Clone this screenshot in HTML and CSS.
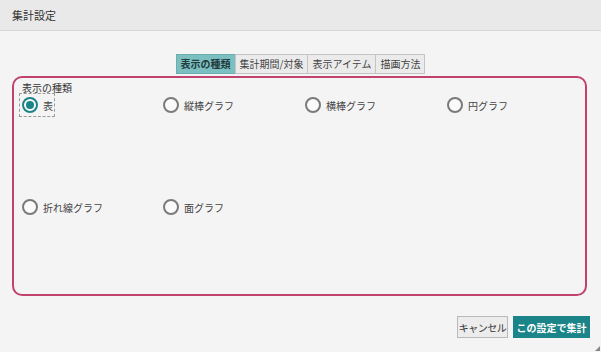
FILE: index.html
```html
<!DOCTYPE html>
<html lang="ja">
<head>
    <meta charset="UTF-8">
    <title>集計設定</title>
    <link rel="stylesheet" href="styles.css">
</head>
<body>
<div class="dialog">
    <div class="titlebar">集計設定</div>
    <div class="tabs">
        <div class="tab active">表示の種類</div>
        <div class="tab">集計期間/対象</div>
        <div class="tab">表示アイテム</div>
        <div class="tab">描画方法</div>
    </div>
    <div class="panel">
        <div class="legend">表示の種類</div>
        <div class="choices">
            <label class="choice focused"><span class="radio checked"></span>表</label>
            <label class="choice"><span class="radio"></span>縦棒グラフ</label>
            <label class="choice"><span class="radio"></span>横棒グラフ</label>
            <label class="choice"><span class="radio"></span>円グラフ</label>
            <label class="choice"><span class="radio"></span>折れ線グラフ</label>
            <label class="choice"><span class="radio"></span>面グラフ</label>
        </div>
    </div>
    <div class="buttons">
        <button class="btn cancel">キャンセル</button>
        <button class="btn primary">この設定で集計</button>
    </div>
    <div class="grip"></div>
</div>
</body>
</html>
```

FILE: styles.css
```css
html, body {
    margin: 0;
    height: 100%;
}

body {
    background: #f4f4f4;
    font-family: "Noto Sans CJK JP", "Noto Sans", sans-serif;
    color: #333;
}

.dialog {
    position: relative;
    width: 601px;
    height: 352px;
    overflow: hidden;
}

.titlebar {
    height: 30px;
    line-height: 30px;
    padding-left: 12px;
    font-size: 11px;
    color: #333;
    background: #e9e9e9;
    border-bottom: 1px solid #d6d6d6;
}

.tabs {
    display: flex;
    justify-content: center;
    margin-top: 23px;
    padding-left: 1px;
}

.tab {
    height: 18px;
    line-height: 18px;
    padding: 0 4px;
    font-size: 10px;
    color: #444;
    background: #ebebeb;
    border: 1px solid #c4c4c4;
    margin-left: -1px;
}

.tab.active {
    background: #7bbfc1;
    border-color: #6aaeb0;
    color: #1f3b3c;
    font-weight: bold;
}

.panel {
    height: 216px;
    margin: 2px 14px 0 12px;
    border: 2px solid #c2426f;
    border-radius: 10px;
    padding: 0 0 0 8px;
}

.legend {
    font-size: 10px;
    line-height: 13px;
    margin-top: 3px;
    color: #333;
}

.choices {
    display: grid;
    grid-template-columns: 141px 142px 142px 141px;
    grid-template-rows: 22px 22px;
    row-gap: 80px;
}

.choice {
    display: flex;
    align-items: center;
    gap: 5px;
    font-size: 10px;
    color: #444;
    justify-self: start;
    padding: 0 2px 0 0;
}

.choice.focused {
    outline: 1px dashed #9a9a9a;
    outline-offset: 0;
    margin-left: -2px;
    padding-left: 2px;
    padding-right: 1px;
}

.radio {
    width: 12px;
    height: 12px;
    border: 2px solid #7a7a7a;
    border-radius: 50%;
    background: #fafafa;
    position: relative;
}

.radio.checked {
    border-color: #1b8488;
}

.radio.checked::after {
    content: "";
    position: absolute;
    left: 2px;
    top: 2px;
    width: 8px;
    height: 8px;
    border-radius: 50%;
    background: #1b8488;
}

.buttons {
    display: flex;
    justify-content: flex-end;
    gap: 5px;
    margin: 20px 11px 0 0;
}

.btn {
    height: 22px;
    padding: 0;
    font-family: inherit;
    font-size: 10px;
    border-radius: 0;
    background: #ececec;
    border: 1px solid #b9b9b9;
    color: #333;
}

.btn.cancel {
    width: 51px;
    letter-spacing: -0.5px;
}

.btn.primary {
    width: 77px;
    background: #1b8488;
    border-color: #1b8488;
    color: #fff;
    font-weight: bold;
}

.grip {
    position: absolute;
    right: 1px;
    bottom: 1px;
    width: 0;
    height: 0;
    border-left: 5px solid transparent;
    border-bottom: 5px solid #888;
}
```
